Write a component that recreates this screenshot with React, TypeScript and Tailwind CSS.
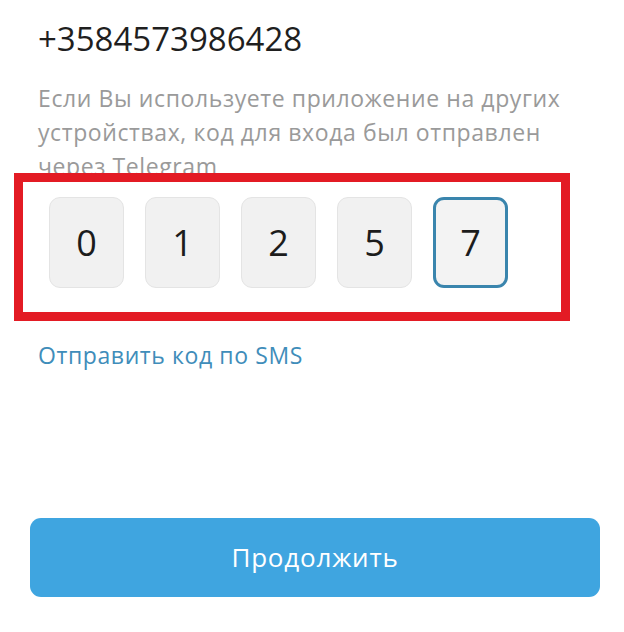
import React from 'react';

const digits = ['0', '1', '2', '5', '7'];

export default function App() {
  return (
    <div className="relative w-[624px] h-[632px] bg-white font-['Open_Sans',sans-serif] overflow-hidden">
      <div className="pl-[38px] pt-[19px] pr-[40px]">
        <div className="text-[33px] leading-[40px] font-medium text-[#1f1f1f]">+3584573986428</div>

        <p className="mt-[22px] text-[23px] leading-[34px] tracking-[0.6px] text-[#9a9a9a] max-w-[540px]">
          Если Вы используете приложение на других устройствах, код для входа был отправлен через Telegram
        </p>

        <div className="mt-[14px] ml-[11px] flex gap-[21px]">
          {digits.map((d, i) => (
            <div
              key={i}
              className={
                i === digits.length - 1
                  ? 'w-[75px] h-[91px] rounded-[11px] border-[3px] border-[#3a85ad] bg-[#f3f3f3] flex items-center justify-center text-[36px] text-[#1c1c1c]'
                  : 'w-[75px] h-[91px] rounded-[11px] border border-[#e4e4e4] bg-[#f1f1f1] flex items-center justify-center text-[36px] text-[#1c1c1c]'
              }
            >
              {d}
            </div>
          ))}
        </div>

        <div className="mt-[52px] text-[23px] leading-[30px] tracking-[0.6px] text-[#3f8dba]">Отправить код по SMS</div>
      </div>

      <button className="ml-[30px] mt-[148px] w-[570px] h-[79px] rounded-[11px] bg-[#3fa5e0] text-white text-[26px] tracking-[0.8px] font-medium flex items-center justify-center">
        Продолжить
      </button>

      {/* red annotation frame over the code inputs */}
      <div className="absolute left-[14px] top-[173px] w-[556px] h-[148px] border-[9px] border-[#e31b24] pointer-events-none" />
    </div>
  );
}
